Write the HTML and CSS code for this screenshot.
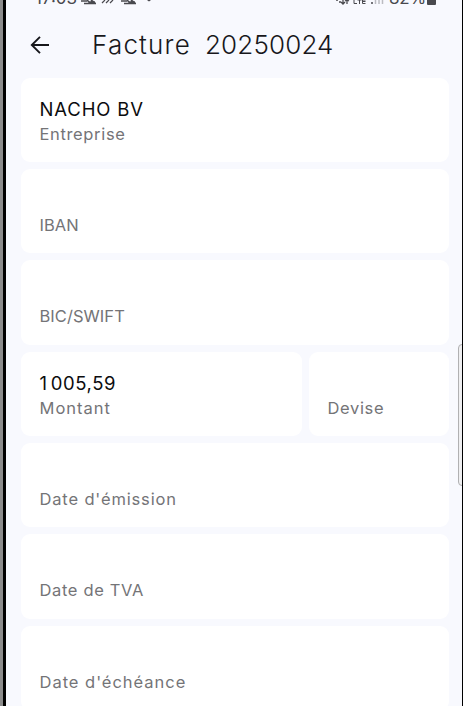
FILE: index.html
```
<!DOCTYPE html>
<html lang="fr">
<head>
    <meta charset="UTF-8">
    <meta name="viewport" content="width=device-width, initial-scale=1.0">
    <title>Facture 20250024</title>
    <link rel="stylesheet" href="styles.css">
</head>
<body>
    <div class="screen">
        <div class="status">
            <span class="time">17:03</span>
            <svg class="status-left" width="74" height="6" viewBox="0 0 74 6" fill="none" stroke="#49494e">
                <path d="M0 1h6M6 0l2 2h6M3 3.500h12M10 0l4 3" stroke-width="1.600"/>
                <path d="M21 3l3-3M25 3l3-3M29 3l3-3" stroke-width="1.200"/>
                <path d="M40 1h6M46 0l2 2h6M43 3.500h12M50 0l4 3" stroke-width="1.600"/>
                <path d="M66 0h4l-2 1.500z" fill="#49494e" stroke="none"/>
            </svg>
            <svg class="status-right" width="50" height="6" viewBox="0 0 50 6" fill="none" stroke="#49494e">
                <path d="M1 0h2M4 2h2M8 0v4M6 2l2 2 2-2M12 4V0M10 1l2-1 2 1" stroke-width="1.300"/>
                <path d="M19 0v3.500h3M22.500 0h4M24.500 0v4M30.500 0h-3v3.500h3M27.500 1.500h3"/>
                <path d="M37 2v2" stroke-width="1.500"/>
                <path d="M40.500 0v4M44 0v4M47.500 0v4" stroke="#bbbcc1" stroke-width="1.500"/>
            </svg>
            <span class="percent">82%</span>
            <span class="battery"></span>
        </div>
        <header class="header">
            <svg class="back" width="20" height="18" viewBox="0 0 20 18" fill="none" stroke="#17171b" stroke-width="1.900">
                <path d="M19 9H2M10 .8L1.800 9l8.200 8.200"/>
            </svg>
            <h1><span class="word">Facture</span><span class="number">20250024</span></h1>
        </header>
        <main class="fields">
            <div class="card">
                <p class="value company">NACHO BV</p>
                <p class="label">Entreprise</p>
            </div>
            <div class="card">
                <p class="value"></p>
                <p class="label code">IBAN</p>
            </div>
            <div class="card">
                <p class="value"></p>
                <p class="label code">BIC/SWIFT</p>
            </div>
            <div class="row">
                <div class="card">
                    <p class="value amount"><span class="thousand">1</span>005,59</p>
                    <p class="label wide">Montant</p>
                </div>
                <div class="card">
                    <p class="value"></p>
                    <p class="label">Devise</p>
                </div>
            </div>
            <div class="card">
                <p class="value"></p>
                <p class="label date">Date d'émission</p>
            </div>
            <div class="card">
                <p class="value"></p>
                <p class="label">Date de TVA</p>
            </div>
            <div class="card">
                <p class="value"></p>
                <p class="label wide">Date d'échéance</p>
            </div>
        </main>
        <div class="edge-handle"></div>
    </div>
</body>
</html>
```
FILE: styles.css
```
* {
    margin: 0;
    padding: 0;
    box-sizing: border-box;
}
body {
    height: 706px;
    overflow: hidden;
    background-color: #8c8c8c;
    font-family: Inter, "Liberation Sans", sans-serif;
}
.screen {
    position: relative;
    height: 706px;
    margin-left: 3px;
    border-left: 3px solid #000;
    border-right: 1px solid #000;
    background-color: #f8f9fe;
    overflow: hidden;
}
.status {
    display: flex;
    align-items: flex-start;
    height: 18px;
    padding-left: 29px;
    color: #49494e;
    font-size: 17px;
    line-height: 20px;
}
.time,
.percent {
    margin-top: -12px;
}
.time {
    width: 46px;
}
.status-right {
    margin-left: 180px;
}
.percent {
    width: 37px;
    margin-left: 4px;
    letter-spacing: -0.2px;
}
.battery {
    width: 9px;
    height: 5px;
    margin-left: 1px;
    background-color: #49494e;
    border-radius: 0 0 1px 1px;
}
.header {
    display: flex;
    align-items: center;
    height: 54px;
    padding-left: 24px;
    color: #17171b;
}
h1 {
    display: flex;
    margin-left: 42px;
    font-size: 26px;
    font-weight: 350;
    line-height: 36px;
}
.word {
    width: 113px;
    letter-spacing: 1.200px;
}
.number {
    letter-spacing: 0.150px;
}
.fields {
    display: flex;
    flex-direction: column;
    gap: 7px;
    padding: 5.800px 13px 0 15px;
}
.card {
    flex: none;
    height: 84.300px;
    padding: 18px 18.500px 0;
    background-color: #fff;
    border-radius: 9px;
}
.row {
    display: grid;
    grid-template-columns: 281px 1fr;
    gap: 7px;
}
.value {
    height: 26px;
    color: #0c0c0e;
    font-size: 18.500px;
    line-height: 26px;
    letter-spacing: 0.600px;
}
.company {
    letter-spacing: 0.850px;
}
.label {
    color: #747477;
    font-size: 16.500px;
    line-height: 24px;
    letter-spacing: 0.650px;
}
.wide {
    letter-spacing: 0.980px;
}
.date {
    letter-spacing: 0.850px;
}
.code {
    letter-spacing: 0.050px;
}
.thousand {
    margin-right: 3px;
}
.edge-handle {
    position: absolute;
    top: 344px;
    right: -4px;
    width: 8px;
    height: 142px;
    border: 1.500px solid #b0b0b2;
    border-radius: 4px;
    background-color: #efeff1;
}
```
